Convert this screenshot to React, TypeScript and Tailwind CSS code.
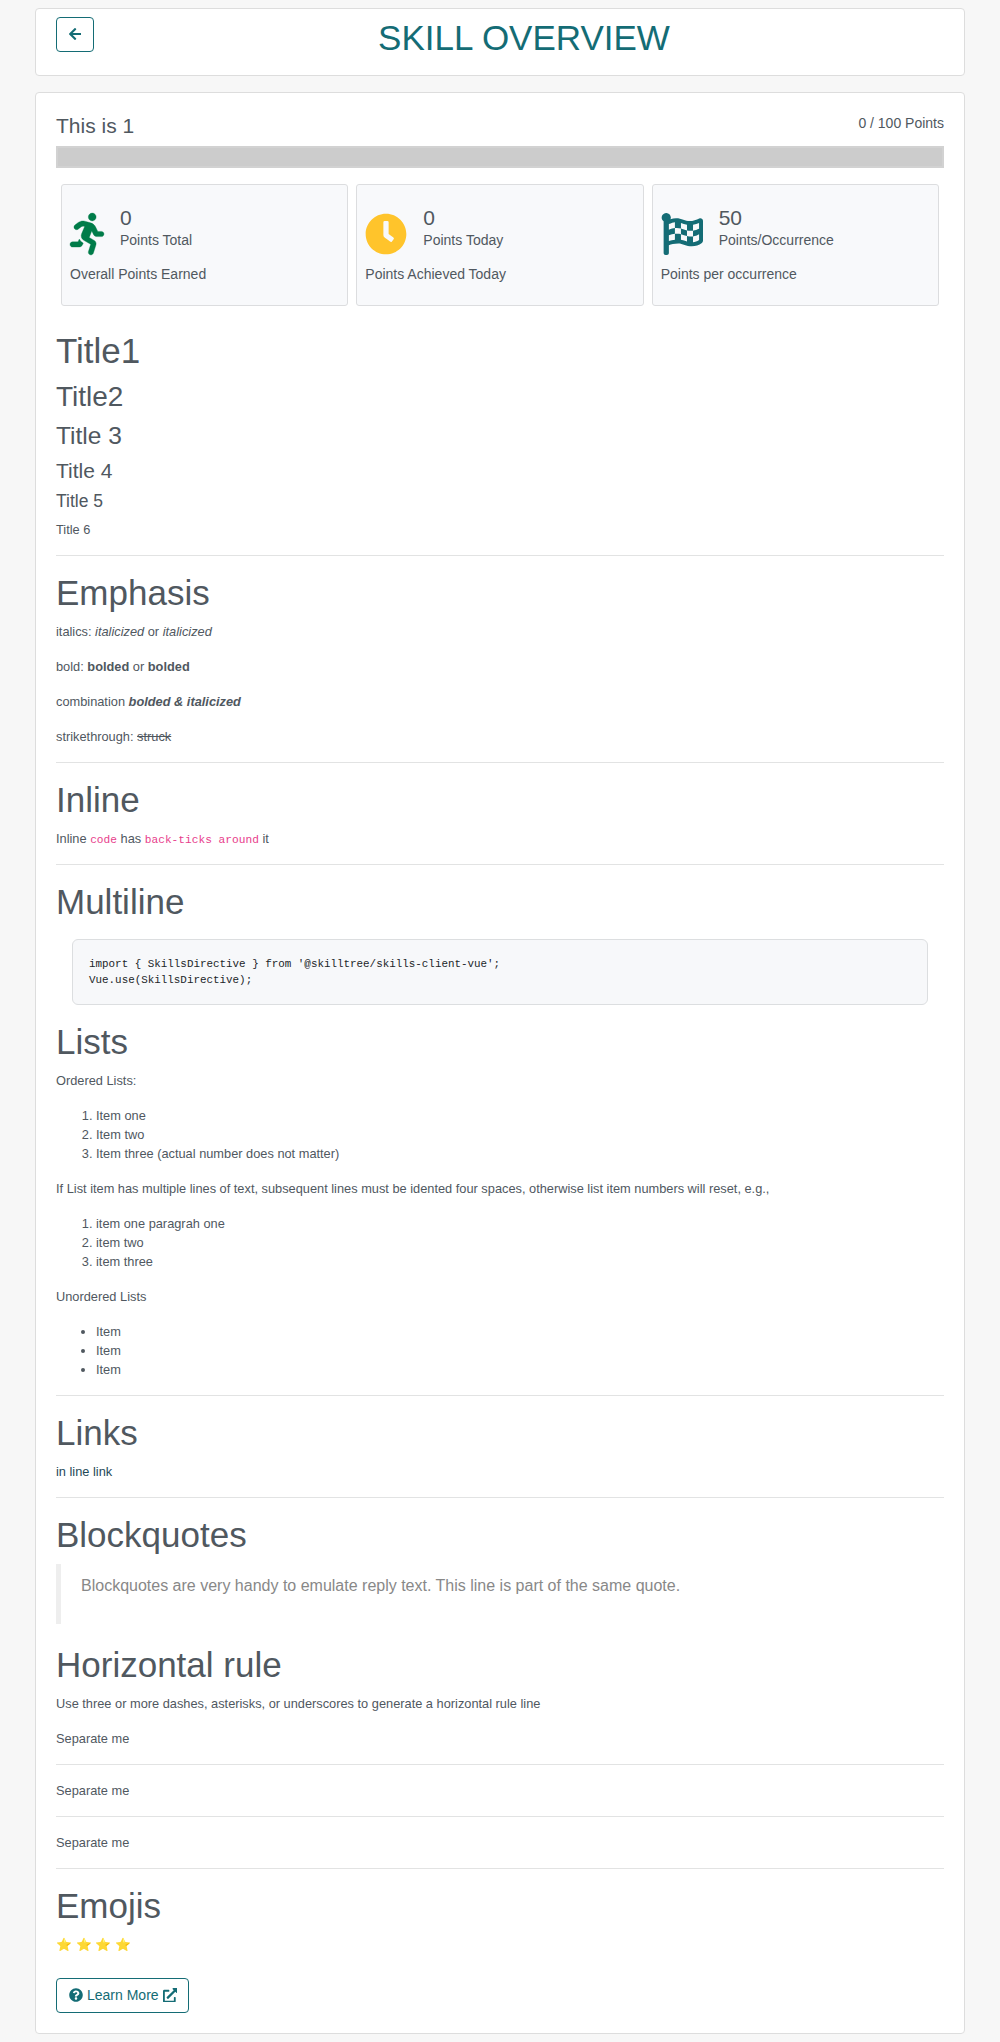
import type { ComponentType, ReactNode } from 'react';
import {
  FaArrowLeft,
  FaClock,
  FaExternalLinkAlt,
  FaFlagCheckered,
  FaQuestionCircle,
  FaRunning,
} from 'react-icons/fa';

const H1 = ({ children }: { children: ReactNode }) => (
  <h1 className="mb-2 text-[35px] leading-[42px]">{children}</h1>
);

const P = ({ children }: { children: ReactNode }) => <p className="mb-4">{children}</p>;

const Rule = () => <hr className="my-4 border-t border-[#e2e3e3]" />;

const Code = ({ children }: { children: ReactNode }) => (
  <code className="font-['Liberation_Mono',monospace] text-[11.2px] leading-none text-[#e83e8c]">{children}</code>
);

type StatProps = {
  icon: ComponentType<{ className?: string }>;
  iconClass: string;
  value: number;
  label: string;
  caption: string;
};

function Stat({ icon: Icon, iconClass, value, label, caption }: StatProps) {
  return (
    <div className="h-[122px] flex-1 rounded-[3px] border border-[#dcdddf] bg-[#f8f9fb] px-2 pt-5">
      <div className="flex gap-4">
        <Icon className={iconClass} />
        <div>
          <div className="text-[21px] leading-[25px]">{value}</div>
          <div className="leading-[21px]">{label}</div>
        </div>
      </div>
      <div className="mt-[9px] leading-[21px]">{caption}</div>
    </div>
  );
}

export default function App() {
  return (
    <div className="min-h-[2042px] bg-[#f7f7f7] px-[35px] pt-2 font-['Liberation_Sans',Arial,sans-serif] text-[14px] leading-[21px] text-[#50585f]">
      <header className="flex h-[68px] rounded border border-[#dddddd] bg-white px-5 pt-2">
        <button
          aria-label="Back"
          className="flex h-[35px] w-[38px] items-center justify-center rounded border border-[#146c75] text-[#146c75]"
        >
          <FaArrowLeft className="mb-px h-[14px] w-[12.25px]" />
        </button>
        <h1 className="ml-2.5 flex-1 text-center text-[35px] leading-[42px] text-[#146c75]">SKILL OVERVIEW</h1>
      </header>

      <main className="mt-4 h-[1942px] rounded border border-[#dddddd] bg-white px-5 pt-5">
        <div className="flex h-[33px] justify-between">
          <h4 className="text-[21px] leading-[25px]">This is 1</h4>
          <span>0 / 100 Points</span>
        </div>
        <div className="h-[22px] border-2 border-[#d2d2d2] bg-[#cccccc]" />

        <div className="mt-4 mb-6 flex gap-2 px-[5px]">
          <Stat
            icon={FaRunning}
            iconClass="mt-2 h-[42px] w-[34px] overflow-visible stroke-[#007c49] stroke-4 text-[#007c49]"
            value={0}
            label="Points Total"
            caption="Overall Points Earned"
          />
          <Stat
            icon={FaClock}
            iconClass="mt-2 h-[42px] w-[42px] text-[#ffc42b]"
            value={0}
            label="Points Today"
            caption="Points Achieved Today"
          />
          <Stat
            icon={FaFlagCheckered}
            iconClass="mt-2 h-[42px] w-[42px] text-[#146c75]"
            value={50}
            label="Points/Occurrence"
            caption="Points per occurrence"
          />
        </div>

        <article className="text-[12.8px] leading-[19px]">
          <H1>Title1</H1>
          <h2 className="mb-2 text-[28px] leading-[33px]">Title2</h2>
          <h3 className="mb-2 text-[24.5px] leading-[29px]">Title 3</h3>
          <h4 className="mb-2 text-[21px] leading-[25px]">Title 4</h4>
          <h5 className="mb-2 text-[17.5px] leading-[21px]">Title 5</h5>
          <h6>Title 6</h6>
          <Rule />
          <H1>Emphasis</H1>
          <P>
            italics: <em>italicized</em> or <em>italicized</em>
          </P>
          <P>
            bold: <strong>bolded</strong> or <strong>bolded</strong>
          </P>
          <P>
            combination{' '}
            <strong>
              <em>bolded &amp; italicized</em>
            </strong>
          </P>
          <P>
            strikethrough: <del>struck</del>
          </P>
          <Rule />
          <H1>Inline</H1>
          <P>
            Inline <Code>code</Code> has <Code>back-ticks around</Code> it
          </P>
          <Rule />
          <H1>Multiline</H1>
          <pre className="m-4 rounded-md border border-[#dcdee0] bg-[#f7f8fa] p-4 font-['Liberation_Mono',monospace] text-[10.88px] leading-4 text-[#212529]">
            {"import { SkillsDirective } from '@skilltree/skills-client-vue';\nVue.use(SkillsDirective);"}
          </pre>
          <H1>Lists</H1>
          <P>Ordered Lists:</P>
          <ol className="mb-4 list-decimal pl-10">
            <li>Item one</li>
            <li>Item two</li>
            <li>Item three (actual number does not matter)</li>
          </ol>
          <P>
            If List item has multiple lines of text, subsequent lines must be idented four spaces, otherwise list item
            numbers will reset, e.g.,
          </P>
          <ol className="mb-4 list-decimal pl-10">
            <li>item one paragrah one</li>
            <li>item two</li>
            <li>item three</li>
          </ol>
          <P>Unordered Lists</P>
          <ul className="mb-4 list-disc pl-10">
            <li>Item</li>
            <li>Item</li>
            <li>Item</li>
          </ul>
          <Rule />
          <H1>Links</H1>
          <P>
            <a className="text-[#1f4957]">in line link</a>
          </P>
          <Rule />
          <H1>Blockquotes</H1>
          <blockquote className="mb-5 h-[60px] border-l-[5px] border-[#eeeeee] py-2.5 pl-5 text-[16px] leading-6 text-[#888888]">
            Blockquotes are very handy to emulate reply text. This line is part of the same quote.
          </blockquote>
          <H1>Horizontal rule</H1>
          <P>Use three or more dashes, asterisks, or underscores to generate a horizontal rule line</P>
          <P>Separate me</P>
          <Rule />
          <P>Separate me</P>
          <Rule />
          <P>Separate me</P>
          <Rule />
          <H1>Emojis</H1>
          <p className="h-[19px]">⭐ ⭐ ⭐ ⭐</p>
        </article>

        <a className="mt-6 flex h-[35px] w-[133px] items-center gap-1 rounded border border-[#146c75] pl-3 text-[#146c75]">
          <FaQuestionCircle className="mb-px size-[14px] shrink-0" />
          <span className="whitespace-nowrap">Learn More</span>
          <FaExternalLinkAlt className="mb-px size-[14.5px] shrink-0" />
        </a>
      </main>
    </div>
  );
}
